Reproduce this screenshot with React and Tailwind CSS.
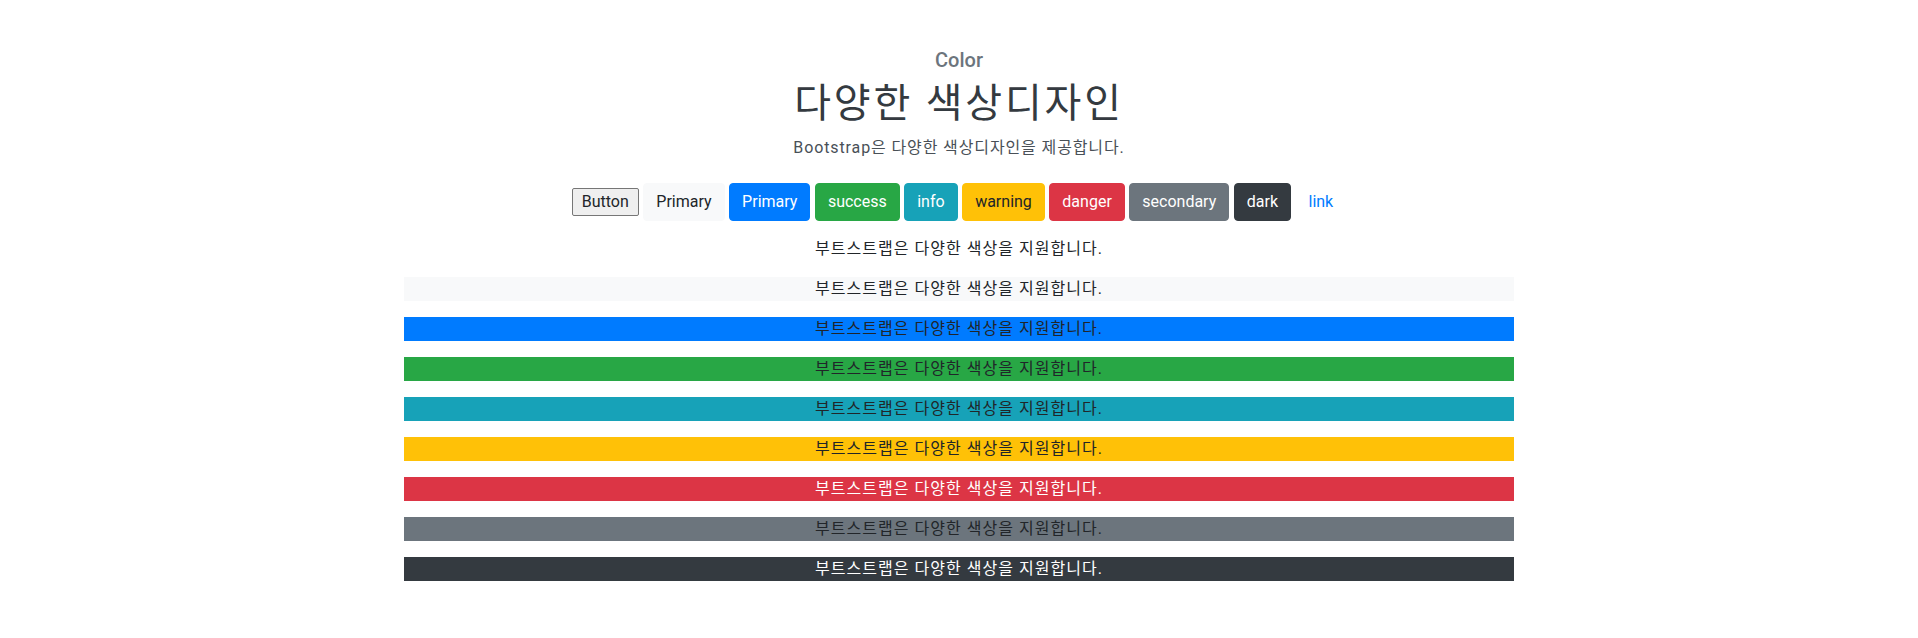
import React from 'react';

const buttons = [
  { label: 'Primary', cls: 'bg-[#f8f9fa] text-[#212529] border-[#f8f9fa]' },
  { label: 'Primary', cls: 'bg-[#007bff] text-white border-[#007bff]' },
  { label: 'success', cls: 'bg-[#28a745] text-white border-[#28a745]' },
  { label: 'info', cls: 'bg-[#17a2b8] text-white border-[#17a2b8]' },
  { label: 'warning', cls: 'bg-[#ffc107] text-[#212529] border-[#ffc107]' },
  { label: 'danger', cls: 'bg-[#dc3545] text-white border-[#dc3545]' },
  { label: 'secondary', cls: 'bg-[#6c757d] text-white border-[#6c757d]' },
  { label: 'dark', cls: 'bg-[#343a40] text-white border-[#343a40]' },
];

const rows = [
  'bg-transparent text-[#212529]',
  'bg-[#f8f9fa] text-[#212529]',
  'bg-[#007bff] text-[#212529]',
  'bg-[#28a745] text-[#212529]',
  'bg-[#17a2b8] text-[#212529]',
  'bg-[#ffc107] text-[#212529]',
  'bg-[#dc3545] text-white',
  'bg-[#6c757d] text-[#212529]',
  'bg-[#343a40] text-white',
];

export default function App() {
  return (
    <div className="min-h-screen bg-white font-['Roboto','Noto_Sans_CJK_KR',sans-serif] text-[#212529]">
      <div className="mx-auto w-[1110px] pt-[48px] text-center">
        <h5 className="text-[20px] leading-[24px] font-medium text-[#6c757d] mb-2">Color</h5>
        <h1 className="text-[40px] leading-[48px] font-normal tracking-[0.07em] text-[#343a40] mb-2">다양한 색상디자인</h1>
        <p className="text-[16px] leading-[24px] tracking-[0.055em] text-[#495057]">Bootstrap은 다양한 색상디자인을 제공합니다.</p>

        {/* buttons */}
        <div className="mt-[23px] flex items-baseline justify-center gap-[4.5px]">
          <button className="px-[9px] py-[1px] text-[16px] leading-[24px] font-normal bg-[#efefef] border border-[#767676] rounded-[2px] text-[#212529]">
            Button
          </button>
          {buttons.map((b, i) => (
            <button key={i} className={`px-3 py-[6px] text-[16px] leading-[24px] border rounded ${b.cls}`}>
              {b.label}
            </button>
          ))}
          <button className="px-3 py-[6px] text-[16px] leading-[24px] border border-transparent text-[#007bff]">
            link
          </button>
        </div>

        {/* colour rows */}
        <div className="mt-4 flex flex-col gap-4">
          {rows.map((r, i) => (
            <p key={i} className={`text-[16px] leading-[24px] tracking-[0.065em] ${r}`}>
              부트스트랩은 다양한 색상을 지원합니다.
            </p>
          ))}
        </div>
      </div>
    </div>
  );
}
